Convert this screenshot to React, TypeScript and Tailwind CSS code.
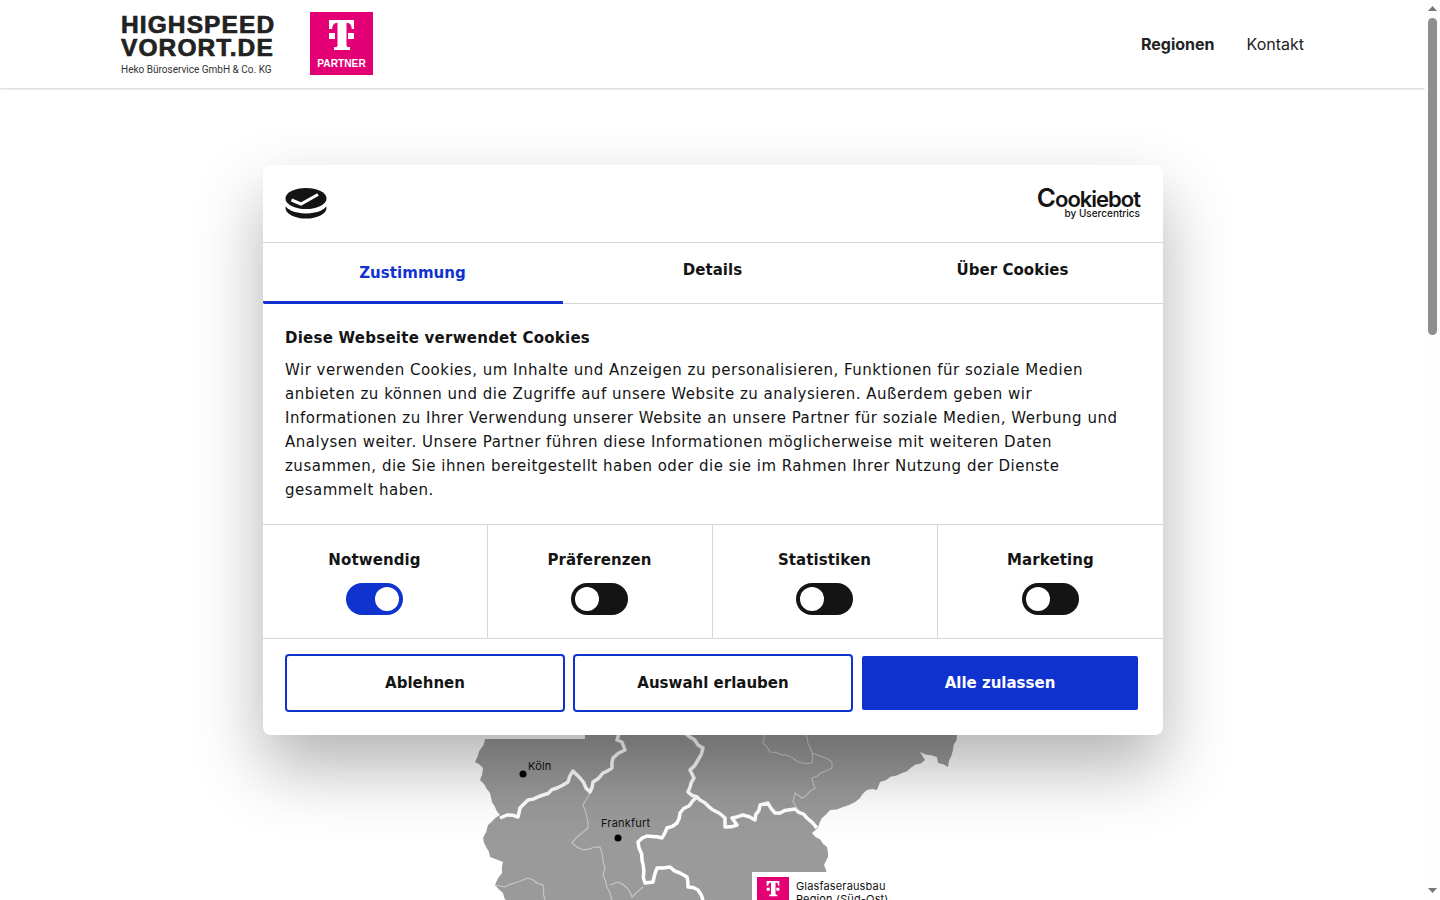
import React, { useState } from "react";

type Pt = [number, number];

const rivers: Pt[][] = [
  [[500, 818], [507, 815], [518, 817], [520, 808], [528, 800], [543, 795], [557, 788], [568, 782], [573, 771], [580, 778], [590, 792], [593, 782], [603, 773], [612, 768], [613, 758], [625, 750], [622, 742], [617, 740], [618, 730]],
  [[685, 733], [703, 748], [698, 760], [690, 770], [694, 778], [688, 792], [697, 797], [680, 813], [677, 823], [667, 828], [662, 838], [647, 836], [638, 842], [642, 860], [645, 883], [653, 882], [657, 868], [670, 867], [680, 873], [687, 877], [688, 887], [698, 890], [703, 900]],
  [[697, 797], [700, 800], [713, 810], [725, 818], [725, 827], [737, 825], [732, 818], [743, 815], [755, 820], [760, 805], [768, 803], [775, 813], [795, 809], [807, 818], [817, 828]],
];

const borders: Pt[][] = [
  [[590, 793], [583, 805], [587, 818], [588, 828], [577, 837], [572, 843], [583, 850], [600, 847], [605, 867], [603, 875], [610, 893], [612, 900]],
  [[610, 885], [618, 882], [627, 888], [632, 897], [643, 887]],
  [[495, 885], [505, 887], [527, 878], [543, 885], [545, 900]],
  [[765, 733], [763, 743], [770, 752], [787, 755], [802, 763], [812, 763], [812, 753], [805, 733]],
  [[812, 753], [823, 757], [832, 762], [832, 768], [812, 778], [815, 788], [802, 798], [795, 793], [793, 802], [797, 808]],
];

// rough outline of the visible part of the map, page coordinates
const outline: Pt[] = [
  [520, 170], [900, 170], [957, 735], [953, 750], [948, 767], [938, 763], [937, 757], [920, 752], [925, 760], [902, 773], [880, 782], [877, 790], [867, 790], [855, 802], [843, 807], [830, 810], [822, 818], [818, 828], [812, 833], [827, 847], [828, 857], [824, 865], [827, 875], [840, 908], [510, 908], [503, 893], [495, 885], [502, 873], [503, 862], [490, 857], [483, 838], [488, 825], [500, 815], [492, 802], [490, 793], [480, 780], [483, 768], [475, 762], [485, 740],
];

// splits each segment and nudges the middle so borders look hand traced
const wiggle = (pts: Pt[], amount: number) => {
  let d = `M${pts[0][0]} ${pts[0][1]}`;
  for (let i = 1; i < pts.length; i++) {
    const [ax, ay] = pts[i - 1];
    const [bx, by] = pts[i];
    const len = Math.hypot(bx - ax, by - ay) || 1;
    const nx = -(by - ay) / len;
    const ny = (bx - ax) / len;
    const steps = Math.max(1, Math.floor(len / 5));
    for (let s = 1; s <= steps; s++) {
      const t = s / steps;
      const off = s === steps ? 0 : Math.sin(i * 7.3 + s * 2.1) * amount;
      d += ` L${(ax + (bx - ax) * t + nx * off).toFixed(1)} ${(ay + (by - ay) * t + ny * off).toFixed(1)}`;
    }
  }
  return d;
};

const TelekomT = ({ className }: { className?: string }) => (
  <svg viewBox="0 0 63 63" className={className}>
    <rect width="63" height="63" fill="#e20074" />
    <path
      fill="#fff"
      d="M19 8h25v9h-2.200c-.3-3.800-1.500-6-5.300-6.300v22.300c0 1.500.5 2 2 2h1.500v3H24v-3h1.500c1.500 0 2-.5 2-2V10.700c-3.800.3-5 2.500-5.300 6.300H19z"
    />
    <path fill="#fff" d="M19 21h6v6h-6zM38 21h6v6h-6z" />
  </svg>
);

const Header = () => (
  <header className="h-[88px] bg-white shadow-[0_1px_2px_rgba(0,0,0,0.18)] flex items-start justify-between pl-[121px] pr-[121px] relative">
    <div className="flex items-start pt-[12px]">
      <div className="w-[189px] text-[#222] pt-[1px]">
        <div className="font-['Liberation_Sans'] font-bold text-[24.500px] leading-[23px] tracking-[1.100px] [-webkit-text-stroke:0.7px_#222] whitespace-nowrap">
          HIGHSPEED
          <br />
          VORORT.DE
        </div>
        <div className="font-['Roboto'] text-[11px] leading-[12px] mt-[5px] text-[#333] whitespace-nowrap origin-left scale-x-[0.91]">
          Heko Büroservice GmbH &amp; Co. KG
        </div>
      </div>
      <div className="relative w-[63px] h-[63px]">
        <TelekomT className="w-[63px] h-[63px]" />
        <span className="absolute left-0 right-0 top-[45px] text-center font-['Liberation_Sans'] font-bold text-[10.200px] leading-[14px] text-white">
          PARTNER
        </span>
      </div>
    </div>
    <nav className="flex items-center h-[88px] gap-8 font-['Inter',sans-serif] text-base text-[#222]">
      <a className="font-bold">Regionen</a>
      <a>Kontakt</a>
    </nav>
  </header>
);

const GermanyMap = () => (
  <div className="relative w-[501px] h-[780px] mx-auto mt-[32px]">
    <svg viewBox="462 120 501 780" className="w-[501px] h-[780px] block">
      <path d={wiggle(outline, 0.9) + " Z"} fill="#9a9a9a" />
      <rect x="485" y="690" width="100" height="49" fill="#fff" />
      {borders.map((b, i) => (
        <path key={i} d={wiggle(b, 0.7)} fill="none" stroke="#c8c8c8" strokeWidth="1.100" />
      ))}
      {rivers.map((r, i) => (
        <path key={i} d={wiggle(r, 1)} fill="none" stroke="#fff" strokeWidth="3.500" strokeLinejoin="round" />
      ))}
      <circle cx="523" cy="774" r="3.500" fill="#000" />
      <circle cx="618" cy="838" r="3.500" fill="#000" />
      <text x="528" y="770" fontSize="11" fontFamily="Inter" fill="#111" className="tracking-[0.2px]">
        Köln
      </text>
      <text x="601" y="827" fontSize="11" fontFamily="Inter" fill="#111" className="tracking-[0.2px]">
        Frankfurt
      </text>
    </svg>
    <div className="absolute left-[290px] top-[752px] w-[160px] h-[60px] bg-white flex items-start gap-[7px] p-[5px]">
      <TelekomT className="w-[32px] h-[32px] shrink-0" />
      <p className="font-['Inter'] text-[11px] leading-[13px] tracking-[0.15px] text-[#111] pt-[3px] whitespace-nowrap">
        Glasfaserausbau
        <br />
        Region (Süd-Ost)
      </p>
    </div>
  </div>
);

const CookiebotMark = () => (
  <svg viewBox="0 0 42 31" className="w-[42px] h-[31px]">
    <ellipse cx="21" cy="20" rx="20.500" ry="10.500" fill="#141414" />
    <ellipse cx="21" cy="14" rx="22" ry="11.500" fill="#fff" />
    <ellipse cx="21" cy="10.500" rx="20.500" ry="10.500" fill="#141414" />
    <path d="M6.500 12 L16 16 L33 6.500" fill="none" stroke="#fff" strokeWidth="3" />
  </svg>
);

const Toggle = ({ on, blue }: { on: boolean; blue?: boolean }) => (
  <span
    className={`flex items-center w-[57px] h-[32px] rounded-full px-[4px] ${
      blue ? "bg-[#1032cf]" : "bg-[#141414]"
    } ${on ? "justify-end" : "justify-start"}`}
  >
    <span className="w-[24px] h-[24px] rounded-full bg-white" />
  </span>
);

const categories = [
  { name: "Notwendig", on: true },
  { name: "Präferenzen", on: false },
  { name: "Statistiken", on: false },
  { name: "Marketing", on: false },
];

const CookieDialog = () => {
  const [tab] = useState("Zustimmung");

  return (
    <div className="absolute inset-0 pl-px flex items-center justify-center font-['DejaVu_Sans',sans-serif] text-[#141414]">
      <div className="w-[900px] h-[570px] bg-white rounded-lg shadow-[0_32px_68px_rgba(0,0,0,0.3)] flex flex-col">
        <div className="h-[78px] shrink-0 border-b border-[#d6d6d6] flex items-center justify-between pl-[22px] pr-[23px]">
          <CookiebotMark />
          <div className="flex flex-col items-end text-[#141414] font-['Inter',sans-serif]">
            <span className="text-[22px] leading-[17px] font-semibold tracking-[-1px] whitespace-nowrap">
              <span className="text-[26px]">C</span>ookiebot
            </span>
            <span className="text-[10px] leading-[10px] font-medium">by Usercentrics</span>
          </div>
        </div>

        <div className="h-[61px] shrink-0 border-b border-[#d6d6d6] grid grid-cols-3 text-[15px] font-bold tracking-[0.05px]">
          {["Zustimmung", "Details", "Über Cookies"].map((t) =>
            t === tab ? (
              <div key={t} className="text-[#1032cf] border-b-[3px] border-[#1032cf] text-center pt-[18px] pr-px leading-[24px] h-[61px] rounded-bl-[2px]">
                {t}
              </div>
            ) : (
              <div key={t} className="text-center pt-[15px] pr-px leading-[24px]">
                {t}
              </div>
            )
          )}
        </div>

        <div className="h-[221px] shrink-0 border-b border-[#d6d6d6] px-[22px] pt-[22px]">
          <h2 className="text-[15px] leading-[24px] font-bold tracking-[0.25px] mb-[8px]">Diese Webseite verwendet Cookies</h2>
          <p className="text-[15px] leading-[24px] tracking-[0.5px]">
            Wir verwenden Cookies, um Inhalte und Anzeigen zu personalisieren, Funktionen für soziale Medien anbieten zu können und die Zugriffe auf unsere Website zu analysieren. Außerdem geben wir Informationen zu Ihrer Verwendung unserer Website an unsere Partner für soziale Medien, Werbung und Analysen weiter. Unsere Partner führen diese Informationen möglicherweise mit weiteren Daten zusammen, die Sie ihnen bereitgestellt haben oder die sie im Rahmen Ihrer Nutzung der Dienste gesammelt haben.
          </p>
        </div>

        <div className="h-[114px] shrink-0 border-b border-[#d6d6d6] grid grid-cols-4">
          {categories.map((c, i) => (
            <div
              key={c.name}
              className={`flex flex-col items-center pt-[23px] gap-[11px] ${i < 3 ? "border-r border-[#d6d6d6] pr-px" : ""}`}
            >
              <span className="text-[15px] leading-[24px] font-bold tracking-[0.1px]">{c.name}</span>
              <Toggle on={c.on} blue={c.on} />
            </div>
          ))}
        </div>

        <div className="flex-1 flex items-start gap-[8px] pl-[22px] pt-[15px] text-[15px] font-bold">
          <button className="w-[280px] h-[58px] border-2 border-[#1032cf] rounded-[4px]">Ablehnen</button>
          <button className="w-[280px] h-[58px] border-2 border-[#1032cf] rounded-[4px]">Auswahl erlauben</button>
          <button className="w-[276px] h-[54px] mt-[2px] ml-[1px] bg-[#1032cf] text-white rounded-[2px]">Alle zulassen</button>
        </div>
      </div>
    </div>
  );
};

const Scrollbar = () => (
  <aside className="w-[15px] shrink-0 bg-[#fdfdfd] flex flex-col items-center">
    <svg viewBox="0 0 9 5" className="w-[9px] h-[5px] mt-[6px] shrink-0">
      <path d="M4.500 0 L9 5 H0 Z" fill="#777" />
    </svg>
    <div className="w-[9px] h-[317px] mt-[7px] rounded-t-[5px] rounded-b-[5px] bg-[#8e8e8e]" />
    <svg viewBox="0 0 9 5" className="w-[9px] h-[5px] mt-auto mb-[7px] shrink-0">
      <path d="M0 0 H9 L4.500 5 Z" fill="#777" />
    </svg>
  </aside>
);

export default function App() {
  return (
    <div className="flex h-screen overflow-hidden bg-white">
      <main className="relative flex-1 min-w-0 overflow-hidden">
        <Header />
        <GermanyMap />
        <CookieDialog />
      </main>
      <Scrollbar />
    </div>
  );
}
